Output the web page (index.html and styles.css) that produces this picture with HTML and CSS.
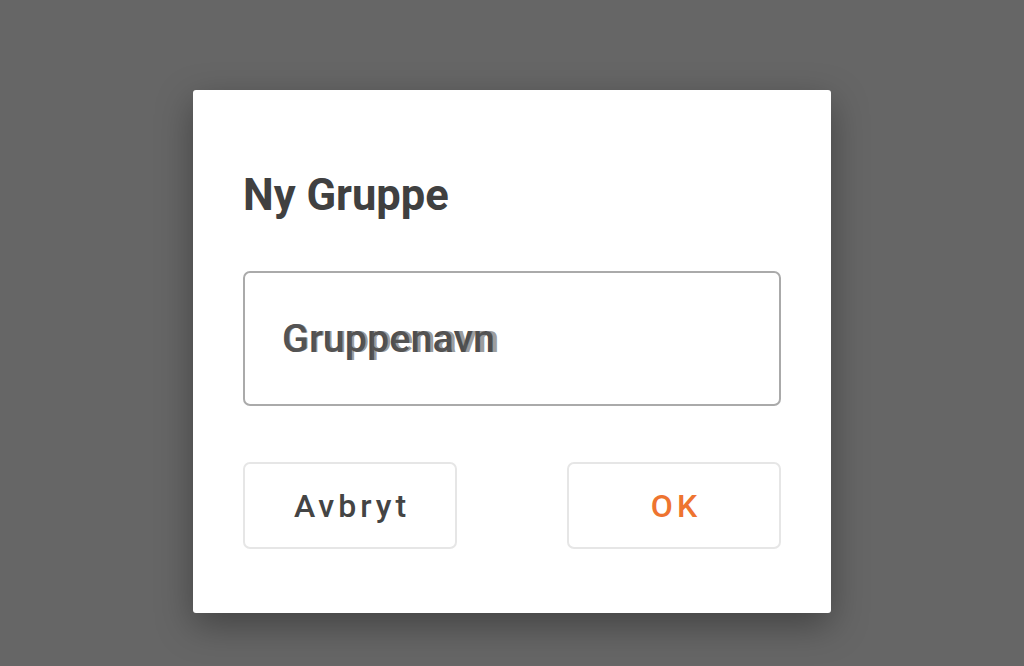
FILE: index.html
```html
<!DOCTYPE html>
<html>
<head>
<meta charset="utf-8">
<link rel="stylesheet" href="styles.css">
</head>
<body>
<div class="dialog">
  <h1 class="title">Ny Gruppe</h1>
  <div class="field">
    <span class="field-text" data-ghost="Gruppenavn">Gruppenavn</span>
  </div>
  <div class="actions">
    <button class="btn btn-cancel">Avbryt</button>
    <button class="btn btn-ok">OK</button>
  </div>
</div>
</body>
</html>
```
FILE: styles.css
```css
html, body {
  margin: 0;
  padding: 0;
  height: 100%;
}
body {
  background: #666666;
  font-family: Roboto, "Liberation Sans", sans-serif;
  display: flex;
  flex-direction: column;
  align-items: center;
  padding-top: 90px;
  box-sizing: border-box;
  overflow: hidden;
}
.dialog {
  width: 638px;
  height: 523px;
  box-sizing: border-box;
  background: #fff;
  border-radius: 3px;
  box-shadow: 0 12px 36px rgba(0,0,0,0.35);
  padding: 0 50px;
  display: flex;
  flex-direction: column;
}
.title {
  margin: 81px 0 0 0;
  font-size: 43.5px;
  line-height: 50px;
  font-weight: 700;
  color: #404040;
}
.field {
  margin-top: 50px;
  height: 135px;
  box-sizing: border-box;
  border: 2px solid #aaaaaa;
  border-radius: 7px;
  display: flex;
  align-items: center;
  padding-left: 37px;
}
.field-text {
  position: relative;
  font-size: 39.5px;
  font-weight: 500;
  color: #4d4d4d;
}
.field-text::after {
  content: attr(data-ghost);
  position: absolute;
  left: 1px;
  top: 0;
  letter-spacing: 0.35px;
  color: rgba(90,90,90,0.6);
  white-space: nowrap;
}
.actions {
  margin-top: 56px;
  display: flex;
  justify-content: space-between;
}
.btn {
  width: 214px;
  height: 87px;
  box-sizing: border-box;
  background: #fff;
  border: 2px solid #e6e6e6;
  border-radius: 7px;
  font-family: Roboto, "Liberation Sans", sans-serif;
  font-size: 32px;
  font-weight: 500;
  letter-spacing: 4px;
  padding: 0 0 0 4px;
  cursor: pointer;
}
.btn-cancel {
  color: #444444;
}
.btn-ok {
  color: #ee7430;
}
```
